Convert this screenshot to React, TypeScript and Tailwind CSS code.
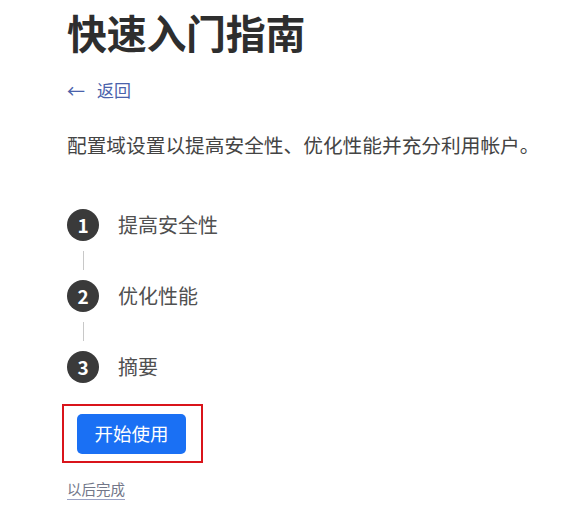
import React from "react";

const steps = ["提高安全性", "优化性能", "摘要"];

export default function App() {
  return (
    <div
      className="w-[563px] h-[510px] bg-white pl-[67px] overflow-hidden"
      style={{ fontFamily: '"Noto Sans CJK SC", "Noto Sans", sans-serif' }}
    >
      <h1 className="pt-[8px] text-[40px] leading-[48px] font-bold text-[#2e2e2e] tracking-[-0.3px]">
        快速入门指南
      </h1>
      <div className="mt-[22px] flex items-center h-[24px] text-[17px] text-[#4a62ab]">
        <span className="text-[18px] w-[30px]">←</span>
        <span>返回</span>
      </div>
      <p className="mt-[29px] text-[19.7px] leading-[28px] text-[#444] whitespace-nowrap">
        配置域设置以提高安全性、优化性能并充分利用帐户。
      </p>
      <div className="mt-[50px] flex flex-col">
        {steps.map((s, i) => (
          <div key={s} className="flex flex-col">
            {i > 0 && (
              <div className="h-[39px] w-[32px] flex justify-center py-[10px]">
                <div className="w-px h-full bg-[#c8c8c8]" />
              </div>
            )}
            <div className="flex items-center h-[32px]">
              <div className="w-[32px] h-[32px] rounded-full bg-[#3a3a3a] text-white flex items-center justify-center text-[19px] font-bold">
                {i + 1}
              </div>
              <span className="ml-[19px] text-[20px] text-[#505050]">{s}</span>
            </div>
          </div>
        ))}
      </div>
      <div className="mt-[21px] ml-[-5px] w-[141px] h-[59px] border-2 border-[#d9141b] flex items-center pl-[13px]">
        <button className="w-[109px] h-[40px] rounded-[5px] bg-[#1a70f4] text-white text-[18.5px]">
          开始使用
        </button>
      </div>
      <div className="mt-[15px] h-[22px] flex items-center">
        <span className="text-[14.5px] text-[#727789] underline decoration-[#9aa2c4] underline-offset-[4px]">
          以后完成
        </span>
      </div>
    </div>
  );
}
